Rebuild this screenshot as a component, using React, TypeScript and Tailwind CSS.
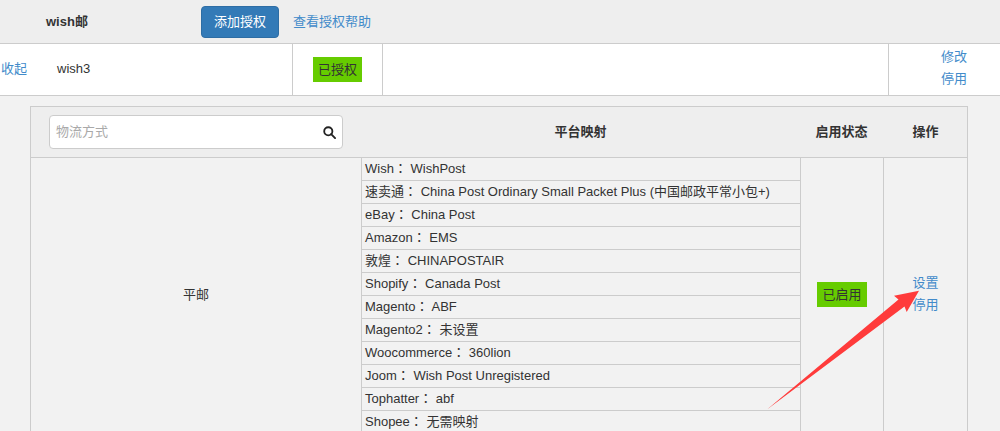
const font = '[font-family:"Liberation_Sans","Noto_Sans_CJK_SC",sans-serif]';

const mappings = [
  ["Wish", "WishPost"],
  ["速卖通", "China Post Ordinary Small Packet Plus (中国邮政平常小包+)"],
  ["eBay", "China Post"],
  ["Amazon", "EMS"],
  ["敦煌", "CHINAPOSTAIR"],
  ["Shopify", "Canada Post"],
  ["Magento", "ABF"],
  ["Magento2", "未设置"],
  ["Woocommerce", "360lion"],
  ["Joom", "Wish Post Unregistered"],
  ["Tophatter", "abf"],
  ["Shopee", "无需映射"],
];

function Badge({ children }: { children: string }) {
  return <span className="bg-[#66cc00] px-[5px] h-[25px] leading-[25px] text-[#333]">{children}</span>;
}

export default function App() {
  return (
    <div className={`relative w-[1000px] h-[431px] overflow-hidden bg-[#f2f2f2] text-[13px] text-[#333] ${font}`}>
      {/* Top bar */}
      <div className="flex items-center h-[44px] bg-[#eeeeee] border-b border-[#cccccc]">
        <b className="ml-[46px] w-[155px] font-bold">wish邮</b>
        <button className="w-[78px] h-[32px] rounded-[4px] bg-[#337ab7] border border-[#2e6da4] text-white text-[13px]">添加授权</button>
        <a className="ml-[14px] text-[#428bca]">查看授权帮助</a>
      </div>

      {/* Account row */}
      <div className="flex h-[52px] bg-white border-b border-[#cccccc]">
        <div className="flex items-center w-[293px] pb-[2px] border-r border-[#cccccc]">
          <a className="ml-[1px] text-[#428bca]">收起</a>
          <span className="ml-[30px]">wish3</span>
        </div>
        <div className="flex items-center justify-center w-[90px] border-r border-[#cccccc]">
          <Badge>已授权</Badge>
        </div>
        <div className="w-[506px] border-r border-[#cccccc]" />
        <div className="flex flex-col items-end justify-center pr-[33px] pb-[4px] flex-1 leading-[22px] text-[#428bca]">
          <a>修改</a>
          <a>停用</a>
        </div>
      </div>

      {/* Channel table */}
      <div className="ml-[30px] mt-[10px] w-[938px] border border-[#cccccc]">
        <div className="flex h-[51px] bg-[#eeeeee] border-b border-[#cccccc] font-bold">
          <div className="flex items-center w-[331px] pl-[18px]">
            <div className="flex items-center justify-between w-[294px] h-[34px] pl-[6px] pr-[6px] bg-white border border-[#cccccc] rounded-[4px]">
              <span className="font-normal text-[#a9a9a9]">物流方式</span>
              <svg width="13" height="13" viewBox="0 0 14 14" fill="none" stroke="#222222" strokeWidth="2">
                <circle cx="5.7" cy="5.7" r="4.4" />
                <path d="M8.8 8.8 13 13" strokeLinecap="round" />
              </svg>
            </div>
          </div>
          <div className="flex items-center justify-center w-[439px] pr-[2px]">平台映射</div>
          <div className="flex items-center justify-center w-[83px] pr-[2px]">启用状态</div>
          <div className="flex items-center justify-center flex-1">操作</div>
        </div>
        <div className="flex">
          <div className="flex items-center justify-center w-[331px] pb-[2px] border-r border-[#cccccc]">平邮</div>
          <div className="w-[439px] border-r border-[#cccccc]">
            {mappings.map(([platform, channel]) => (
              <div key={platform} className="h-[23px] pl-[3px] leading-[20px] border-b border-[#cccccc]">
                {platform}
                <span className='[font-family:"Noto_Sans_CJK_TC",sans-serif]'>：</span>{" "}
                {channel}
              </div>
            ))}
          </div>
          <div className="flex items-center justify-center w-[83px] pb-[3px] border-r border-[#cccccc]">
            <Badge>已启用</Badge>
          </div>
          <div className="flex flex-col items-center justify-center flex-1 pb-[4px] leading-[22px] text-[#428bca]">
            <a>设置</a>
            <a>停用</a>
          </div>
        </div>
      </div>

      {/* Annotation arrow */}
      <svg className="absolute left-0 top-0" width="1000" height="431" viewBox="0 0 1000 431">
        <path d="M767 409.5 898.5 299.5 894 295.7 919 290.7 906.7 312 904.5 306.5 Z" fill="#ff3b3b" />
      </svg>
    </div>
  );
}
